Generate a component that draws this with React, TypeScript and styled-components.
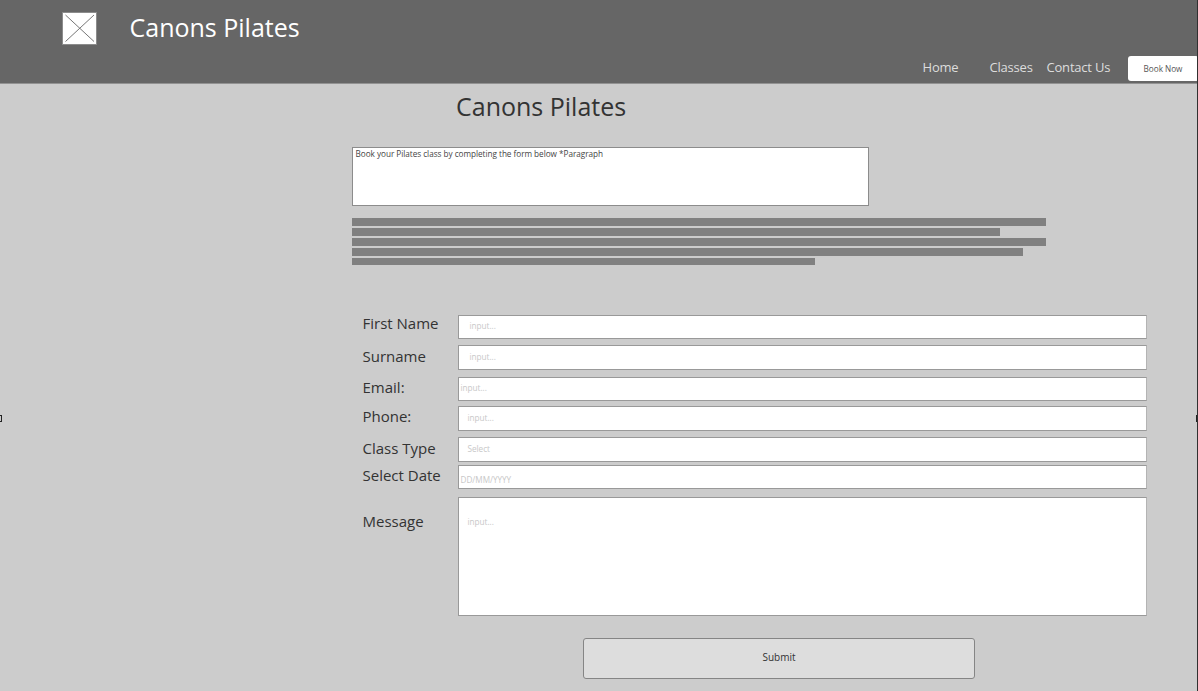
import React from "react";
import styled, { createGlobalStyle } from "styled-components";

const GlobalStyle = createGlobalStyle`
  * { box-sizing: border-box; }
  html, body { margin: 0; padding: 0; overflow: hidden; }
  body { font-family: "Open Sans", sans-serif; background: #ccc; }
  h1, p { margin: 0; font-weight: 400; }
`;

const Page = styled.div`
  position: relative;
  width: 1198px;
  height: 691px;
  background: #ccc;
  color: #333;
  border-right: 1px solid #303030;
  overflow: hidden;
`;

const Header = styled.header`
  height: 84px;
  background: #666;
  border-bottom: 1px solid #929292;
  display: flex;
  flex-direction: column;
`;

const Brand = styled.div`
  display: flex;
  height: 56px;
  padding: 12px 0 0 62px;
`;

const Logo = styled.svg`
  width: 35px;
  height: 33px;
  margin-right: 32.5px;
`;

const BrandName = styled.p`
  margin-top: -1px;
  font-size: 25px;
  line-height: 32px;
  color: #fff;
  white-space: nowrap;
`;

const Nav = styled.nav`
  display: flex;
  height: 26px;
  padding-left: 922.5px;
`;

const NavLink = styled.a<{ $width: number }>`
  flex: none;
  width: ${(p) => p.$width}px;
  font-size: 13px;
  line-height: 22px;
  letter-spacing: -0.2px;
  color: #ddd;
  white-space: nowrap;
`;

const BookButton = styled.button`
  flex: none;
  width: 70px;
  height: 25px;
  padding: 0;
  border: 0;
  border-radius: 3px 2px 2px 3px;
  background: #fff;
  color: #555;
  font: 8.2px/24px "Open Sans", sans-serif;
  letter-spacing: -0.03px;
`;

const Main = styled.main`
  display: flex;
  flex-direction: column;
  padding-left: 352px;
`;

const Title = styled.h1`
  margin-top: 6px;
  padding-left: 104px;
  font-size: 25px;
  line-height: 32px;
  white-space: nowrap;
`;

const Intro = styled.p`
  width: 517px;
  height: 59px;
  margin-top: 25px;
  padding: 0 2.5px;
  border: 1px solid #8c8c8c;
  background: #fff;
  color: #444;
  font-size: 8.2px;
  line-height: 12px;
  letter-spacing: -0.03px;
`;

const TextLines = styled.div`
  display: flex;
  flex-direction: column;
  gap: 2px;
  margin-top: 12px;
  height: 97px;
`;

const TextLine = styled.div<{ $width: number }>`
  width: ${(p) => p.$width}px;
  height: 7.9px;
  background: #808080;
`;

const Form = styled.form`
  display: flex;
  flex-direction: column;
  padding-left: 10.5px;
`;

const Row = styled.div<{ $height: number; $gap: number }>`
  display: flex;
  align-items: flex-start;
  height: ${(p) => p.$height}px;
  margin-bottom: ${(p) => p.$gap}px;
`;

const Label = styled.label<{ $shift: number }>`
  flex: none;
  width: 95.5px;
  margin-top: ${(p) => p.$shift}px;
  font-size: 15px;
  line-height: 20px;
  white-space: nowrap;
`;

const Field = styled.div<{ $top: number; $left: number }>`
  width: 689px;
  height: 100%;
  padding: ${(p) => p.$top}px 0 0 ${(p) => p.$left}px;
  border: 1px solid #999;
  border-right-color: #b4b4b4;
  background: #fff;
  color: #c8c8c8;
  font-size: 8.2px;
  line-height: 12px;
  letter-spacing: -0.03px;
`;

const SubmitButton = styled.button`
  width: 392px;
  height: 41px;
  margin: 22px 0 0 220.5px;
  padding: 0 0 3px;
  border: 1px solid #858585;
  border-radius: 3px;
  background: #ddd;
  color: #333;
  font: 10px/14px "Open Sans", sans-serif;
`;

const Handle = styled.span<{ $left: number }>`
  position: absolute;
  top: 415px;
  left: ${(p) => p.$left}px;
  width: 6px;
  height: 7px;
  border: 1px solid #222;
  background: #ccc;
`;

const lines = [694, 648, 694, 671, 463];

const fields = [
  { label: "First Name", hint: "input...", height: 24, gap: 6, shift: -2, top: 4, left: 10.5 },
  { label: "Surname", hint: "input...", height: 25, gap: 7, shift: 1, top: 5, left: 10.5 },
  { label: "Email:", hint: "input...", height: 24, gap: 5, shift: 0, top: 4, left: 1.5 },
  { label: "Phone:", hint: "input...", height: 25, gap: 6, shift: 0, top: 5, left: 8.5 },
  { label: "Class Type", hint: "Select", height: 25, gap: 3, shift: 1, top: 5, left: 8.5 },
  { label: "Select Date", hint: "DD/MM/YYYY", height: 24, gap: 8, shift: 0, top: 8, left: 1.5 },
  { label: "Message", hint: "input...", height: 119, gap: 0, shift: 14, top: 18, left: 8.5 },
];

export default function App() {
  return (
    <>
      <GlobalStyle />
      <Page>
        <Header>
          <Brand>
            <Logo viewBox="0 0 35 33">
              <rect x="0.5" y="0.5" width="34" height="32" fill="#fff" stroke="#8c8c8c" />
              <path d="M3.5 3 L32 29.5 M32 3 L3.5 29.5" stroke="#777" strokeWidth="1" fill="none" />
            </Logo>
            <BrandName>Canons Pilates</BrandName>
          </Brand>
          <Nav>
            <NavLink $width={67}>Home</NavLink>
            <NavLink $width={57}>Classes</NavLink>
            <NavLink $width={81.5}>Contact Us</NavLink>
            <BookButton>Book Now</BookButton>
          </Nav>
        </Header>
        <Main>
          <Title>Canons Pilates</Title>
          <Intro>Book your Pilates class by completing the form below *Paragraph</Intro>
          <TextLines>
            {lines.map((width, i) => (
              <TextLine key={i} $width={width} />
            ))}
          </TextLines>
          <Form>
            {fields.map((f) => (
              <Row key={f.label} $height={f.height} $gap={f.gap}>
                <Label $shift={f.shift}>{f.label}</Label>
                <Field $top={f.top} $left={f.left}>{f.hint}</Field>
              </Row>
            ))}
            <SubmitButton type="button">Submit</SubmitButton>
          </Form>
        </Main>
        <Handle $left={-4} />
        <Handle $left={1196} />
      </Page>
    </>
  );
}
